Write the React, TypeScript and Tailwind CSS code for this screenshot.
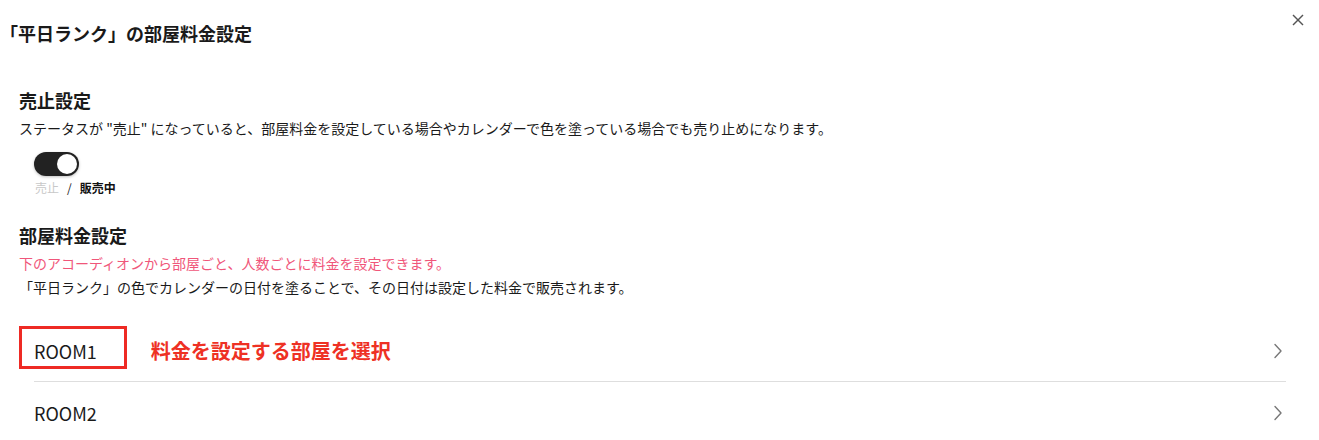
import React from "react";

const Chevron = () => (
  <svg width="10" height="16" viewBox="0 0 10 16" fill="none">
    <polyline points="2,1.5 8,8 2,14.5" stroke="#777" strokeWidth="1.4" strokeLinecap="round" strokeLinejoin="round" />
  </svg>
);

export default function App() {
  return (
    <div className="relative w-[1319px] h-[440px] bg-white overflow-hidden font-['Noto_Sans_CJK_JP','Noto_Sans',sans-serif] text-[#1a1a1a]">
      <button className="absolute top-[14px] right-[15px] w-[12px] h-[12px]">
        <svg width="12" height="12" viewBox="0 0 12 12">
          <line x1="1" y1="1" x2="11" y2="11" stroke="#555" strokeWidth="1.4" />
          <line x1="11" y1="1" x2="1" y2="11" stroke="#555" strokeWidth="1.4" />
        </svg>
      </button>

      <h1 className="pt-[22px] text-[18px] leading-[22px] font-bold">「平日ランク」の部屋料金設定</h1>

      <div className="pl-[19px] pr-[33px]">
        <h2 className="mt-[44px] text-[18px] leading-[24px] font-bold">売止設定</h2>
        <p className="mt-[6px] text-[14px] leading-[20px]">
          ステータスが "売止" になっていると、部屋料金を設定している場合やカレンダーで色を塗っている場合でも売り止めになります。
        </p>
        <div className="ml-[15px] mt-[14px] w-[45px] h-[24px] rounded-full bg-[#222] flex items-center justify-end pr-[2px] shadow-[0_1px_3px_rgba(0,0,0,0.25)]">
          <div className="w-[20px] h-[20px] rounded-full bg-white" />
        </div>
        <div className="ml-[16px] mt-[5px] text-[12px] leading-[14px] flex items-center">
          <span className="text-[#c8c8c8]">売止</span>
          <span className="mx-[8px] text-[#222]">/</span>
          <span className="font-bold text-[#111]">販売中</span>
        </div>

        <h2 className="mt-[28px] text-[18px] leading-[24px] font-bold">部屋料金設定</h2>
        <p className="mt-[4px] text-[14px] leading-[24px] text-[#f0567a]">
          下のアコーディオンから部屋ごと、人数ごとに料金を設定できます。
        </p>
        <p className="text-[14px] leading-[24px]">
          「平日ランク」の色でカレンダーの日付を塗ることで、その日付は設定した料金で販売されます。
        </p>

        <div className="ml-[15px] mt-[22px]">
          <div className="relative h-[61px] flex items-center justify-between border-b border-[#dedede]">
            <div className="flex items-center">
              <span className="text-[18px] leading-[24px]">ROOM1</span>
              <span className="ml-[54px] text-[20px] leading-[28px] font-bold text-[#ee3124]">料金を設定する部屋を選択</span>
            </div>
            <div className="pr-[3px]"><Chevron /></div>
            <div className="absolute left-[-15px] top-[5px] w-[108px] h-[43px] border-[3px] border-[#ee2a24]" />
          </div>
          <div className="h-[61px] flex items-center justify-between">
            <span className="text-[18px] leading-[24px]">ROOM2</span>
            <div className="pr-[3px]"><Chevron /></div>
          </div>
        </div>
      </div>
    </div>
  );
}
